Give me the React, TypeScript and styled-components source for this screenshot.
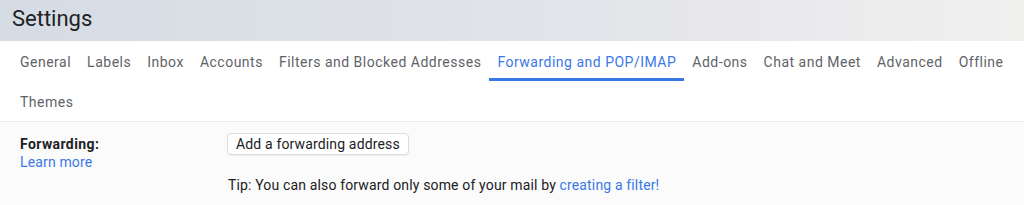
import React from "react";
import styled, { createGlobalStyle } from "styled-components";

const Global = createGlobalStyle`
  html, body { margin: 0; padding: 0; background: #ffffff; }
  body { font-family: Roboto, "Noto Sans", Arial, sans-serif; -webkit-font-smoothing: antialiased; }
  * { box-sizing: border-box; }
`;

const Page = styled.div`
  width: 1024px;
  height: 205px;
  overflow: hidden;
  display: flex;
  flex-direction: column;
  background: #ffffff;
`;

const Header = styled.header`
  height: 41px;
  flex: none;
  display: flex;
  align-items: center;
  padding: 0 12px 4px;
  background: linear-gradient(90deg, #d6dce4 0%, #dfe2e8 45%, #e9e9ec 75%, #f1f0ef 100%);
`;

const Title = styled.h1`
  margin: 0;
  font-size: 22px;
  font-weight: 400;
  color: #202124;
  letter-spacing: 0;
`;

const TabBar = styled.nav`
  display: flex;
  flex-wrap: wrap;
  padding: 0 12px;
  border-bottom: 1px solid #e8eaed;
  background: #ffffff;
`;

const Tab = styled.a<{ $active?: boolean }>`
  height: 40px;
  display: flex;
  align-items: center;
  padding: 4px 8px 0;
  font-size: 14px;
  letter-spacing: 0.5px;
  color: ${(p) => (p.$active ? "#3b78e7" : "#5f6368")};
  text-decoration: none;
  white-space: nowrap;
  border-bottom: 3px solid ${(p) => (p.$active ? "#3b78e7" : "transparent")};
  cursor: pointer;
`;

const Content = styled.section`
  flex: 1;
  background: #fbfbfb;
  display: grid;
  grid-template-columns: 207px 1fr;
  padding: 11px 20px 0;
`;

const LabelCol = styled.div`
  display: flex;
  flex-direction: column;
`;

const Label = styled.div`
  font-size: 14px;
  font-weight: 700;
  letter-spacing: 0.4px;
  color: #202124;
  line-height: 22px;
`;

const Link = styled.a`
  font-size: 14px;
  letter-spacing: 0.15px;
  color: #3b78e7;
  text-decoration: none;
  line-height: 15px;
`;

const ValueCol = styled.div`
  display: flex;
  flex-direction: column;
  align-items: flex-start;
`;

const Button = styled.button`
  font-family: inherit;
  font-size: 14px;
  letter-spacing: 0.15px;
  color: #202124;
  background: #ffffff;
  border: 1px solid #dadce0;
  border-radius: 4px;
  height: 22px;
  padding: 0 8px;
  box-shadow: 0 1px 1px rgba(0, 0, 0, 0.06);
  cursor: pointer;
`;

const Tip = styled.p`
  margin: 22px 0 0 1px;
  font-size: 14px;
  letter-spacing: 0.15px;
  color: #202124;
`;

const tabs = [
  "General",
  "Labels",
  "Inbox",
  "Accounts",
  "Filters and Blocked Addresses",
  "Forwarding and POP/IMAP",
  "Add-ons",
  "Chat and Meet",
  "Advanced",
  "Offline",
  "Themes",
];

export default function App() {
  return (
    <Page>
      <Global />
      <Header>
        <Title>Settings</Title>
      </Header>
      <TabBar>
        {tabs.map((t) => (
          <Tab key={t} $active={t === "Forwarding and POP/IMAP"}>
            {t}
          </Tab>
        ))}
      </TabBar>
      <Content>
        <LabelCol>
          <Label>Forwarding:</Label>
          <Link>Learn more</Link>
        </LabelCol>
        <ValueCol>
          <Button>Add a forwarding address</Button>
          <Tip>
            Tip: You can also forward only some of your mail by{" "}
            <Link>creating a filter!</Link>
          </Tip>
        </ValueCol>
      </Content>
    </Page>
  );
}
